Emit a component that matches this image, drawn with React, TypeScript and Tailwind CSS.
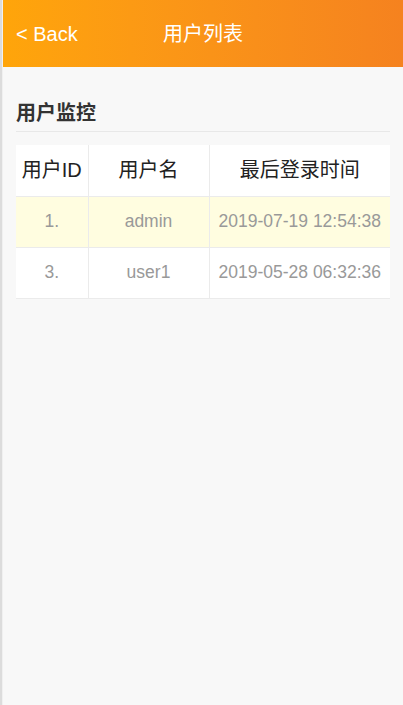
import React from "react";

const rows = [
  { id: "1.", name: "admin", time: "2019-07-19 12:54:38", bg: "bg-[#fffde0]" },
  { id: "3.", name: "user1", time: "2019-05-28 06:32:36", bg: "bg-white" },
];

export default function App() {
  return (
    <div
      className="min-h-[705px] w-[403px] flex bg-[#f8f8f8]"
      style={{ fontFamily: '"Liberation Sans", Arial, "Noto Sans CJK SC", sans-serif' }}
    >
      <div className="w-[2px] bg-[#dcdcdc] shrink-0" />
      <div className="w-[1px] bg-[#f0f0f0] shrink-0" />
      <div className="flex-1 flex flex-col">
        <div className="h-[67px] bg-gradient-to-r from-[#ffa50a] to-[#f5821f] flex items-center relative text-white text-[20px]">
          <span className="pl-[13px]">&lt; Back</span>
          <span className="absolute left-0 right-0 text-center pointer-events-none">用户列表</span>
        </div>
        <div className="px-[13px] pt-[34px]">
          <div className="text-[20px] font-bold text-[#333] leading-[24px] pb-[6px] border-b border-[#e8e8e8]">
            用户监控
          </div>
          <table className="mt-[13px] w-full border-collapse bg-white">
            <colgroup>
              <col className="w-[72px]" />
              <col className="w-[121px]" />
              <col />
            </colgroup>
            <thead>
              <tr className="h-[51px] text-[#222] text-[20px]">
                <th className="font-normal border-r border-b border-[#ebebeb]">用户ID</th>
                <th className="font-normal border-r border-b border-[#ebebeb]">用户名</th>
                <th className="font-normal border-b border-[#ebebeb]">最后登录时间</th>
              </tr>
            </thead>
            <tbody>
              {rows.map((r) => (
                <tr key={r.id} className={`h-[51px] text-[#999] text-[17.5px] ${r.bg}`}>
                  <td className="text-center border-r border-b border-[#ebebeb]">{r.id}</td>
                  <td className="text-center border-r border-b border-[#ebebeb]">{r.name}</td>
                  <td className="text-center border-b border-[#ebebeb] whitespace-nowrap">{r.time}</td>
                </tr>
              ))}
            </tbody>
          </table>
        </div>
      </div>
    </div>
  );
}
